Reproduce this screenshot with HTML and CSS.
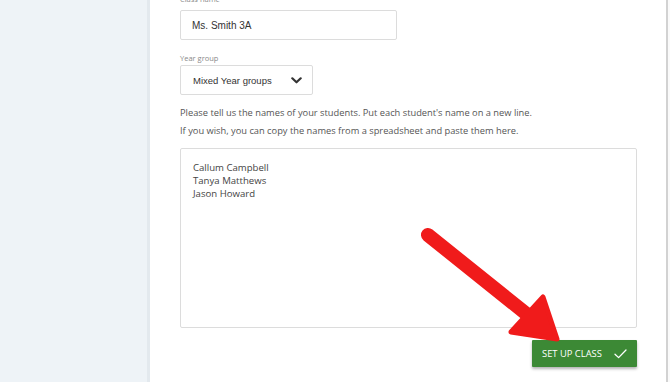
FILE: index.html
```html
<!DOCTYPE html>
<html lang="en">
<head>
<meta charset="utf-8">
<title>Set up class</title>
<link rel="stylesheet" href="styles.css">
</head>
<body>
<div class="app">
  <aside class="sidebar"></aside>
  <main class="main">
    <form class="form">
      <label class="label">Class name</label>
      <input class="input" type="text" value="Ms. Smith 3A">
      <label class="label label-year">Year group</label>
      <div class="select">
        <span>Mixed Year groups</span>
        <svg class="chev" width="11" height="7" viewBox="0 0 11 7"><path d="M1.3 1.3 L5.5 5.3 L9.7 1.3" fill="none" stroke="#333" stroke-width="2.2" stroke-linecap="round" stroke-linejoin="round"/></svg>
      </div>
      <p class="intro">Please tell us the names of your students. Put each student's name on a new line.<br>If you wish, you can copy the names from a spreadsheet and paste them here.</p>
      <textarea class="names">Callum Campbell
Tanya Matthews
Jason Howard</textarea>
      <div class="actions">
        <button type="button" class="btn">SET UP CLASS
          <svg width="13" height="10" viewBox="0 0 13 10"><path d="M1 5.2 L4.6 8.6 L12 1" fill="none" stroke="#fff" stroke-width="1.3" stroke-linecap="round" stroke-linejoin="round"/></svg>
        </button>
      </div>
    </form>
  </main>
  <div class="edge"></div>
  <svg class="arrow" width="670" height="382" viewBox="0 0 670 382">
    <line x1="428" y1="235" x2="534" y2="320" stroke="#f01b1b" stroke-width="14" stroke-linecap="round"/>
    <polygon points="511,332 543,297 557,339" fill="#f01b1b" stroke="#f01b1b" stroke-width="5" stroke-linejoin="round"/>
  </svg>
</div>
</body>
</html>
```
FILE: styles.css
```css
html, body {
  margin: 0;
  padding: 0;
  background: #ffffff;
}
.app {
  position: relative;
  display: flex;
  width: 670px;
  height: 382px;
  overflow: hidden;
  font-family: "Open Sans", "Liberation Sans", sans-serif;
}
.sidebar {
  width: 147px;
  flex: none;
  background: #eef3f7;
  border-right: 3px solid #e3e9ee;
}
.main {
  flex: 1;
  padding: 0 29px 0 30px;
  border-right: 2px solid #d2d2d2;
}
.edge {
  width: 2px;
  flex: none;
  background: #fafafa;
}
.form {
  display: flex;
  flex-direction: column;
  align-items: flex-start;
  margin-top: -5px;
}
.label {
  font-size: 7.5px;
  line-height: 9px;
  color: #8a8a8a;
}
.input {
  margin-top: 6px;
  box-sizing: border-box;
  width: 217px;
  height: 30px;
  padding: 0 11px;
  border: 1px solid #dcdcdc;
  border-radius: 2px;
  font-family: "Liberation Sans", Arial, sans-serif;
  font-size: 10px;
  color: #333;
  outline: none;
}
.label-year {
  margin-top: 14px;
}
.select {
  margin-top: 2px;
  box-sizing: border-box;
  width: 133px;
  height: 30px;
  padding: 0 10px 0 12px;
  border: 1px solid #dcdcdc;
  border-radius: 2px;
  display: flex;
  align-items: center;
  justify-content: space-between;
  font-family: "Liberation Sans", Arial, sans-serif;
  font-size: 9.5px;
  color: #333;
}
.chev {
  display: block;
}
.intro {
  margin: 9px 0 0;
  font-size: 9.3px;
  line-height: 18px;
  color: #555;
}
.names {
  margin-top: 8px;
  box-sizing: border-box;
  width: 457px;
  height: 180px;
  padding: 12px 12px;
  border: 1px solid #dcdcdc;
  border-radius: 2px;
  resize: none;
  font-family: "Open Sans", sans-serif;
  font-size: 9.6px;
  line-height: 13px;
  color: #444;
  outline: none;
}
.actions {
  align-self: stretch;
  display: flex;
  justify-content: flex-end;
  margin-top: 12px;
}
.btn {
  display: flex;
  align-items: center;
  gap: 12px;
  height: 27px;
  width: 105px;
  box-sizing: border-box;
  padding: 0 0 0 10px;
  border: none;
  border-radius: 1px;
  background: #3c8935;
  color: #fff;
  font-family: "Open Sans", sans-serif;
  font-size: 9.4px;
  box-shadow: 0 2px 3px rgba(0, 0, 0, 0.3);
}
.arrow {
  position: absolute;
  left: 0;
  top: 0;
  pointer-events: none;
}
```
